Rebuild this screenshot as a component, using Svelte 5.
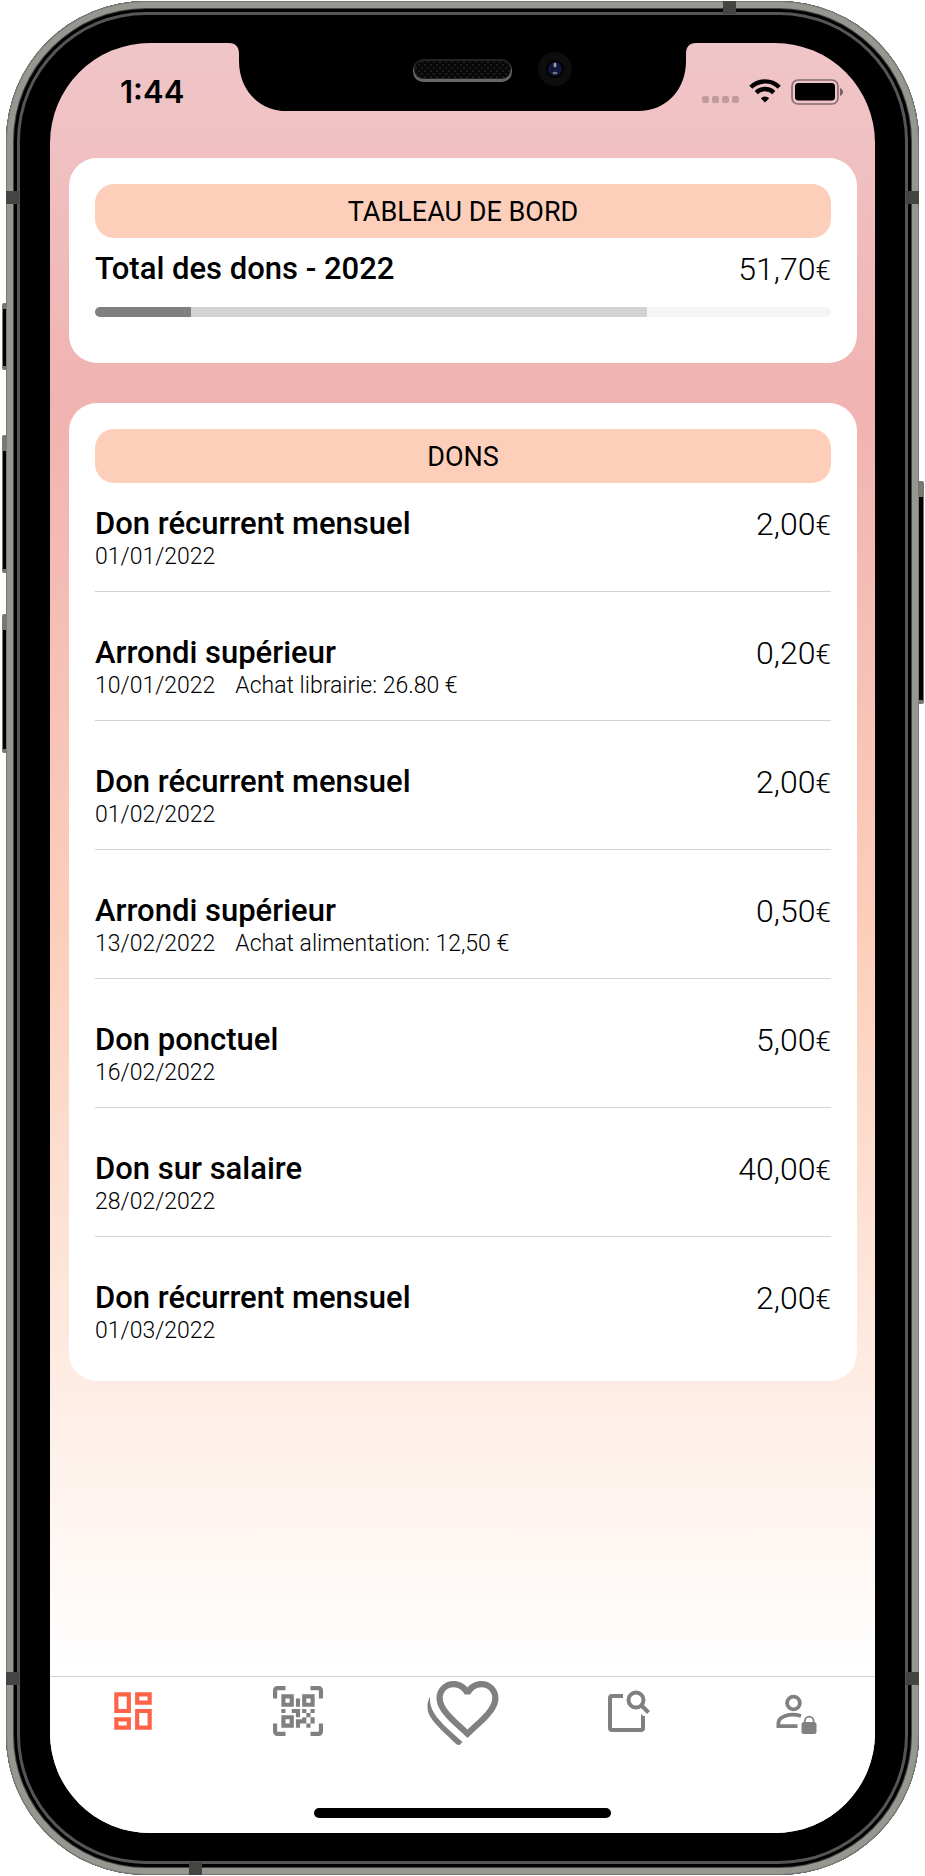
<script lang="ts">
  const goal = { year: 2022, total: '51,70', done: 13, planned: 62 };

  const donations = [
    { title: 'Don récurrent mensuel', date: '01/01/2022', amount: '2,00' },
    { title: 'Arrondi supérieur', date: '10/01/2022', note: 'Achat librairie: 26.80 €', amount: '0,20' },
    { title: 'Don récurrent mensuel', date: '01/02/2022', amount: '2,00' },
    { title: 'Arrondi supérieur', date: '13/02/2022', note: 'Achat alimentation: 12,50 €', amount: '0,50' },
    { title: 'Don ponctuel', date: '16/02/2022', amount: '5,00' },
    { title: 'Don sur salaire', date: '28/02/2022', amount: '40,00' },
    { title: 'Don récurrent mensuel', date: '01/03/2022', amount: '2,00' },
  ];

  const tabs = [
    { id: 'dashboard', label: 'Tableau de bord' },
    { id: 'scan', label: 'Scanner' },
    { id: 'give', label: 'Donner' },
    { id: 'search', label: 'Rechercher' },
    { id: 'account', label: 'Compte' },
  ];

  let current = $state('dashboard');
</script>

<div class="page">
  <div class="phone">
    <span class="key key-mute"></span>
    <span class="key key-up"></span>
    <span class="key key-down"></span>
    <span class="key key-power"></span>
    <span class="band side left high"></span>
    <span class="band side right high"></span>
    <span class="band side left low"></span>
    <span class="band side right low"></span>
    <span class="band top"></span>
    <span class="band bottom"></span>

    <div class="screen">
      <header class="status">
        <time>1:44</time>
        <svg class="notch" viewBox="0 0 467 68" aria-hidden="true">
          <defs>
            <pattern id="mesh" width="6" height="6" patternUnits="userSpaceOnUse">
              <rect width="6" height="6" fill="#080808" />
              <path d="M0 0h2v2H0zM3 3h2v2H3z" fill="#1c1c1c" />
            </pattern>
          </defs>
          <path d="M0 0C7 0 10 4 10 11V18C10 46 29 68 58 68H409C438 68 457 46 457 18V11C457 4 460 0 467 0Z" />
          <rect x="184" y="17" width="99" height="22" rx="10" fill="#666" />
          <rect x="185" y="16" width="97" height="20" rx="9" fill="#222" />
          <rect x="186" y="18" width="95" height="17" rx="8" fill="url(#mesh)" />
          <circle cx="326" cy="26" r="17" fill="#0d0d0e" />
          <circle cx="326" cy="26" r="9" fill="#000" />
          <circle cx="326" cy="26" r="7" fill="#10153f" />
          <ellipse cx="326" cy="22" rx="1.5" ry="2.5" fill="#999" />
          <ellipse cx="326" cy="30" rx="2.5" ry="1.2" fill="#777" />
        </svg>
        <div class="signals">
          <svg width="37" height="24" viewBox="0 0 37 24" aria-hidden="true">
            <g opacity="0.2">
              <rect x="0" y="17" width="7" height="7" rx="2" />
              <rect x="10" y="17" width="7" height="7" rx="2" />
              <rect x="20" y="17" width="7" height="7" rx="2" />
              <rect x="30" y="17" width="7" height="7" rx="2" />
            </g>
          </svg>
          <svg width="32" height="24" viewBox="0 0 32 24" aria-hidden="true">
            <g fill="none" stroke="#000" stroke-width="4.4">
              <path d="M1.8 8.2a20.3 20.3 0 0 1 28.4 0" />
              <path d="M7.2 13.6a12.6 12.6 0 0 1 17.6 0" />
            </g>
            <path d="M16 23.5l-4.2-4.2a6 6 0 0 1 8.4 0z" />
          </svg>
          <svg width="54" height="26" viewBox="1 0 54 26" aria-hidden="true">
            <rect x="2" y="1" width="46" height="24" rx="6" fill="none" stroke="#000" stroke-width="1.6" opacity="0.45" />
            <rect x="5" y="4" width="40" height="17.5" rx="3.5" />
            <path d="M50 9c4 1.500 4 6.500 0 8z" opacity="0.5" />
          </svg>
        </div>
      </header>

      <main>
        <section class="card">
          <h1>TABLEAU DE BORD</h1>
          <div class="row total">
            <span class="name">Total des dons - {goal.year}</span>
            <span class="amount">{goal.total}<small>€</small></span>
          </div>
          <div class="meter">
            <span class="done" style="width: {goal.done}%"></span>
            <span class="planned" style="width: {goal.planned}%"></span>
          </div>
        </section>

        <section class="card">
          <h2>DONS</h2>
          <ul>
            {#each donations as donation}
              <li>
                <div class="row">
                  <span class="name">{donation.title}</span>
                  <span class="amount">{donation.amount}<small>€</small></span>
                </div>
                <div class="details">
                  <span>{donation.date}</span>
                  {#if donation.note}
                    <span>{donation.note}</span>
                  {/if}
                </div>
              </li>
            {/each}
          </ul>
        </section>
      </main>

      <nav>
        <div class="tabs">
          {#each tabs as tab}
            <button
              type="button"
              class:active={current === tab.id}
              aria-label={tab.label}
              onclick={() => (current = tab.id)}
            >
              {#if tab.id === 'dashboard'}
                <svg width="50" height="50" viewBox="0 0 24 24">
                  <path d="M19 5v2h-4V5h4M9 5v6H5V5h4m10 8v6h-4v-6h4M9 17v2H5v-2h4M21 3h-8v6h8V3zM11 3H3v10h8V3zm10 8h-8v10h8V11zm-10 4H3v6h8v-6z" />
                </svg>
              {:else if tab.id === 'scan'}
                <svg width="50" height="50" viewBox="0 0 24 24">
                  <path d="M4,4H10V10H4V4M20,4V10H14V4H20M14,15H16V13H14V11H16V13H18V11H20V13H18V15H20V18H18V20H16V18H13V20H11V16H14V15M16,15V18H18V15H16M4,20V14H10V20H4M6,6V8H8V6H6M16,6V8H18V6H16M6,16V18H8V16H6M4,11H6V13H4V11M9,11H13V15H11V13H9V11M11,6H13V10H11V6M2,2V6H0V2A2,2 0 0,1 2,0H6V2H2M22,0A2,2 0 0,1 24,2V6H22V2H18V0H22M2,18V22H6V24H2A2,2 0 0,1 0,22V18H2M22,22V18H24V22A2,2 0 0,1 22,24H18V22H22Z" />
                </svg>
              {:else if tab.id === 'give'}
                <svg width="72" height="68" viewBox="0 0 72 68">
                  <path
                    transform="translate(3.3 -5.3) scale(3.1)"
                    d="M16.5 3c-1.740 0-3.410.810-4.500 2.090C10.910 3.810 9.240 3 7.500 3 4.420 3 2 5.420 2 8.500c0 3.780 3.400 6.860 8.550 11.540L12 21.350l1.450-1.320C18.600 15.360 22 12.280 22 8.500 22 5.420 19.580 3 16.500 3zm-4.400 15.550l-.1.1-.1-.1C7.140 14.240 4 11.390 4 8.500 4 6.500 5.500 5 7.500 5c1.540 0 3.040.990 3.570 2.360h1.870C13.460 5.990 14.960 5 16.500 5c2 0 3.500 1.500 3.500 3.500 0 2.890-3.140 5.740-7.900 10.050z"
                  />
                  <path d="M3 19.500C-.5 26-.5 34 3.500 40C8 48 19 57 28 66Q31 69 33 67.500L35.500 65C27 57 18 50 11 41.500C5 34 2.500 28 3 19.500Z" />
                </svg>
              {:else if tab.id === 'search'}
                <svg width="50" height="50" viewBox="0 0 50 50">
                  <g fill="none" stroke="currentColor" stroke-width="4">
                    <path d="M20 10H9Q7 10 7 12V42Q7 44 9 44H38Q40 44 40 42V30" />
                    <circle cx="33" cy="14" r="7.5" />
                    <path d="M38 19l7.500 7.500" />
                  </g>
                  <path d="M38 28l4 3.500V34h-4z" />
                </svg>
              {:else}
                <svg width="50" height="50" viewBox="0 0 50 50">
                  <g fill="none" stroke="currentColor" stroke-width="3.8">
                    <circle cx="25.5" cy="17" r="6.4" />
                    <path d="M29.500 40.200H10.400V37C10.400 31 21 26.500 33 30" />
                    <path d="M36.800 37v-2a4.400 4.400 0 0 1 8.800 0v2" stroke-width="1.8" />
                  </g>
                  <rect x="33.500" y="36" width="15" height="12" rx="2.500" />
                </svg>
              {/if}
            </button>
          {/each}
        </div>
        <div class="home"></div>
      </nav>
    </div>
  </div>
</div>

<style>
  :global(body) {
    margin: 0;
    background: #fff;
  }

  * {
    box-sizing: border-box;
  }

  .page {
    display: flex;
    min-height: 100vh;
    padding: 1px 6px;
    font-family: Roboto, 'Liberation Sans', sans-serif;
    color: #000;
  }

  .phone {
    position: relative;
    flex: 1;
    display: flex;
    padding: 42px 44px;
    border-radius: 140px;
    background: #000;
    box-shadow:
      inset 0 0 0 1px #777873,
      inset 0 0 0 7px #969791,
      inset 0 0 0 8px #444,
      inset 0 0 0 11px #000,
      inset 0 0 0 14px #555;
  }

  /* hardware keys and antenna bands sit on the metal rim */
  .key {
    position: absolute;
    left: -4px;
    width: 4px;
    border: 1px solid #777873;
    border-top-width: 6px;
    border-bottom-width: 4px;
    border-right: 0;
    border-radius: 2px 0 0 2px;
    background: #000;
  }
  .key-mute {
    top: 302px;
    height: 67px;
  }
  .key-up {
    top: 434px;
    height: 138px;
    border-top-width: 16px;
  }
  .key-down {
    top: 613px;
    height: 139px;
    border-top-width: 16px;
  }
  .key-power {
    top: 480px;
    left: auto;
    right: -5px;
    width: 5px;
    height: 223px;
    border-top-width: 16px;
    border-right: 1px solid #777873;
    border-left: 0;
    border-radius: 0 2px 2px 0;
  }

  .band {
    position: absolute;
    width: 13px;
    height: 13px;
    background: #444542;
  }
  .left {
    left: 0;
  }
  .right {
    right: 0;
  }
  .high {
    top: 190px;
  }
  .low {
    bottom: 190px;
  }
  .band.top {
    top: 0;
    right: 183px;
  }
  .band.bottom {
    bottom: 0;
    left: 183px;
  }

  .screen {
    flex: 1;
    display: flex;
    flex-direction: column;
    min-width: 0;
    overflow: hidden;
    border-radius: 100px;
    background: linear-gradient(#f0c6c9 0%, #f0b3b1 20%, #fccfba 50%, #fff 91%);
  }

  .status {
    display: grid;
    grid-template-columns: 1fr 467px 1fr;
    height: 115px;
  }
  .status time {
    padding: 30px 0 0 70px;
    font-family: Inter, sans-serif;
    font-size: 31px;
    font-weight: 600;
    line-height: 38px;
  }
  .notch {
    width: 467px;
    height: 68px;
  }
  .signals {
    display: flex;
    gap: 10px;
    height: 26px;
    margin-top: 36px;
    padding-left: 6px;
  }

  main {
    flex: 1;
    display: flex;
    flex-direction: column;
    gap: 40px;
    padding: 0 18px 40px 19px;
  }

  .card {
    padding: 26px;
    border-radius: 28px;
    background: #fff;
  }

  h1,
  h2 {
    margin: 0;
    padding-top: 2px;
    border-radius: 19px;
    background: #fdcfba;
    font-size: 27px;
    font-weight: 400;
    line-height: 52px;
    text-align: center;
  }

  .row {
    display: flex;
    justify-content: space-between;
    line-height: 38px;
  }
  .total {
    padding: 12px 0 19px;
  }
  .name {
    font-size: 31px;
    font-weight: 500;
  }
  .amount {
    height: 38px;
    font-size: 32px;
    font-weight: 300;
  }
  .amount small {
    font-size: 28px;
  }

  .meter {
    display: flex;
    height: 10px;
    margin-bottom: 20px;
    overflow: hidden;
    border-radius: 5px;
    background: #f5f5f5;
  }
  .done {
    background: #808080;
  }
  .planned {
    background: #d3d3d3;
  }

  ul {
    margin: 0;
    padding: 0;
    list-style: none;
  }
  li {
    padding: 42px 0 20px;
    border-bottom: 1px solid #d3d3d3;
  }
  li:first-child {
    padding-top: 22px;
  }
  li:last-child {
    padding-bottom: 10px;
    border-bottom: 0;
  }

  .details {
    display: flex;
    gap: 20px;
    font-size: 23px;
    font-weight: 300;
    line-height: 28px;
  }

  nav {
    border-top: 1px solid #d3d3d3;
    background: #fff;
  }
  .tabs {
    display: grid;
    grid-template-columns: repeat(5, 1fr);
  }
  button {
    display: flex;
    align-items: center;
    justify-content: center;
    height: 68px;
    padding: 0;
    border: 0;
    background: none;
    color: #808080;
    cursor: pointer;
  }
  button.active {
    color: #ff6347;
  }
  button svg {
    fill: currentColor;
  }

  .home {
    width: 36%;
    height: 10px;
    margin: 63px auto 15px;
    border-radius: 5px;
    background: #000;
  }
</style>
